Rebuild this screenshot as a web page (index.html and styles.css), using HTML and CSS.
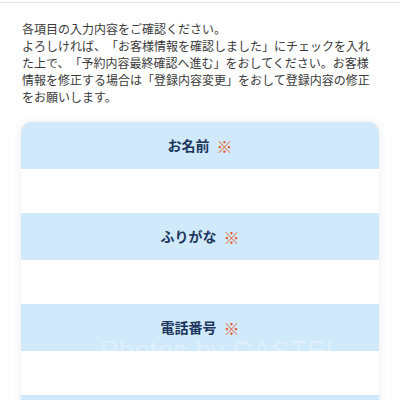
FILE: index.html
```html
<!DOCTYPE html>
<html lang="ja">
<head>
<meta charset="utf-8">
<link rel="stylesheet" href="styles.css">
</head>
<body>
<div class="topbar"></div>
<p class="intro">各項目の入力内容をご確認ください。<br>よろしければ、「お客様情報を確認しました」にチェックを入れた上で、「予約内容最終確認へ進む」をおしてください。お客様情報を修正する場合は「登録内容変更」をおして登録内容の修正をお願いします。</p>
<div class="card">
  <div class="field-head"><span class="label">お名前</span><span class="req">※</span></div>
  <div class="field-body"></div>
  <div class="field-head"><span class="label">ふりがな</span><span class="req">※</span></div>
  <div class="field-body"></div>
  <div class="field-head"><span class="label">電話番号</span><span class="req">※</span></div>
  <div class="field-body"></div>
  <div class="field-head"><span class="label">メールアドレス</span><span class="req">※</span></div>
  <div class="field-body"></div>
  <div class="watermark">Photos by CASTEL</div>
</div>
</body>
</html>
```
FILE: styles.css
```css
html, body {
  margin: 0;
  padding: 0;
  background: #ffffff;
}
body {
  font-family: "Noto Sans CJK JP", "Noto Sans", sans-serif;
  color: #333333;
  text-spacing-trim: space-all;
}
.topbar {
  height: 2px;
  border-bottom: 1px solid #e4e4e4;
}
.intro {
  margin: 0;
  padding: 17px 22px 0 22px;
  font-size: 12px;
  line-height: 17px;
  color: #3a3a3a;
  text-spacing-trim: space-all;
}
.card {
  position: relative;
  margin: 17px 21px 0 21px;
  border-radius: 10px;
  overflow: hidden;
  box-shadow: 0 0 10px rgba(0, 0, 0, 0.09);
  background: #ffffff;
}
.field-head {
  height: 47px;
  background: #d1eafb;
  display: flex;
  align-items: center;
  justify-content: center;
  font-size: 14px;
  line-height: 17px;
  font-weight: bold;
  color: #1c365d;
}
.req {
  margin-left: 7px;
  font-size: 16px;
  line-height: 16px;
  color: #e55a2f;
  font-weight: normal;
}
.field-body {
  height: 44px;
  background: #ffffff;
}
.watermark {
  position: absolute;
  left: 79px;
  top: 215px;
  font-family: "Liberation Sans", sans-serif;
  font-size: 28px;
  line-height: 28px;
  color: rgba(255, 255, 255, 0.3);
  white-space: nowrap;
}
```
